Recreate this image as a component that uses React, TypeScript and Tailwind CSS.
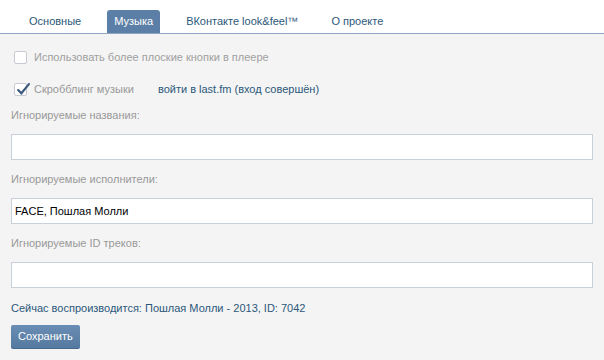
import { useState } from "react";

const tabs = ["Основные", "Музыка", "ВКонтакте look&feel™", "О проекте"];

function Checkbox({ checked }: { checked: boolean }) {
  return (
    <span className="relative w-[13px] h-[13px] border border-[#c6cbd1] bg-white rounded-[2px] flex-shrink-0">
      {checked && (
        <svg
          viewBox="0 0 13 13"
          className="absolute left-[1px] top-[-2px] w-[14px] h-[14px]"
        >
          <path
            d="M2 7.5 L5 10.5 L12 2"
            fill="none"
            stroke="#3d5a7c"
            strokeWidth="2"
            strokeLinecap="round"
          />
        </svg>
      )}
    </span>
  );
}

function Field({ label, value }: { label: string; value?: string }) {
  return (
    <div className="mt-[12px]">
      <div className="h-[14px] leading-[14px] text-[#999999]">{label}</div>
      <div className="mt-[12px] h-[26px] border border-[#c9d0d8] bg-white px-[3px] leading-[24px] text-black">
        {value}
      </div>
    </div>
  );
}

export default function App() {
  const [active] = useState(1);

  return (
    <div
      className="w-[604px] h-[360px] bg-[#f4f4f4] text-[11px] overflow-hidden"
      style={{ fontFamily: '"Liberation Sans", Tahoma, sans-serif' }}
    >
      {/* вкладки */}
      <div className="h-[34px] bg-white border-b border-[#8ea6c2] flex items-end pl-[22px] gap-[19px]">
        {tabs.map((t, i) => (
          <div
            key={t}
            className={
              i === active
                ? "h-[23px] leading-[23px] px-[7px] rounded-t-[3px] bg-[#5b7fa6] text-white"
                : "h-[23px] leading-[23px] px-[7px] text-[#2b587a]"
            }
          >
            {t}
          </div>
        ))}
      </div>

      <div className="px-[11px]">
        <div className="mt-[16px] h-[14px] flex items-center pl-[3px] gap-[7px] text-[#a0a0a0]">
          <Checkbox checked={false} />
          <span>Использовать более плоские кнопки в плеере</span>
        </div>
        <div className="mt-[18px] h-[14px] flex items-center pl-[3px] gap-[7px]">
          <Checkbox checked />
          <span className="text-[#999999]">Скробблинг музыки</span>
          <span className="ml-[17px] text-[#2b587a]">войти в last.fm (вход совершён)</span>
        </div>

        <div className="mt-[8px]" />
        <Field label="Игнорируемые названия:" />
        <Field label="Игнорируемые исполнители:" value="FACE, Пошлая Молли" />
        <Field label="Игнорируемые ID треков:" />

        <div className="mt-[13px] h-[14px] leading-[14px] text-[#2b587a]">
          Сейчас воспроизводится: Пошлая Молли - 2013, ID: 7042
        </div>

        <button className="mt-[10px] h-[24px] px-[7px] rounded-[2px] text-white bg-gradient-to-b from-[#6a8db5] to-[#55799f] border-b border-[#45688e]">
          Сохранить
        </button>
      </div>
    </div>
  );
}
